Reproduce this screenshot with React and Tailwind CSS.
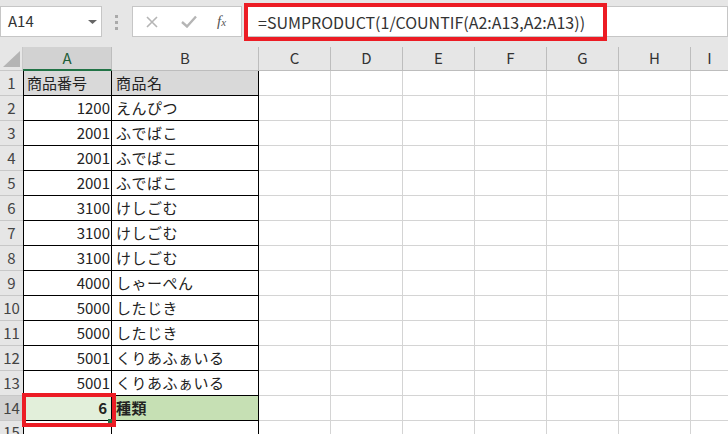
import React from "react";

const font = { fontFamily: '"Noto Sans CJK JP", "Noto Sans", sans-serif' };

const cols = ["C", "D", "E", "F", "G", "H"];

const rows = [
  { n: 1, a: "商品番号", b: "商品名", head: true },
  { n: 2, a: "1200", b: "えんぴつ" },
  { n: 3, a: "2001", b: "ふでばこ" },
  { n: 4, a: "2001", b: "ふでばこ" },
  { n: 5, a: "2001", b: "ふでばこ" },
  { n: 6, a: "3100", b: "けしごむ" },
  { n: 7, a: "3100", b: "けしごむ" },
  { n: 8, a: "3100", b: "けしごむ" },
  { n: 9, a: "4000", b: "しゃーぺん" },
  { n: 10, a: "5000", b: "したじき" },
  { n: 11, a: "5000", b: "したじき" },
  { n: 12, a: "5001", b: "くりあふぁいる" },
  { n: 13, a: "5001", b: "くりあふぁいる" },
  { n: 14, a: "6", b: "種類", total: true },
];

const EmptyCells = () => (
  <>
    {cols.map((c) => (
      <div key={c} className="w-[72px] shrink-0 border-r border-b border-[#d4d4d4]" />
    ))}
    <div className="flex-1 border-b border-[#d4d4d4]" />
  </>
);

const Row = ({ r }) => {
  let aCls = "bg-white";
  let bCls = "bg-white";
  if (r.head) {
    aCls = "bg-[#d9d9d9]";
    bCls = "bg-[#d9d9d9]";
  }
  if (r.total) {
    aCls = "bg-[#e2efda] font-bold pr-[4px]";
    bCls = "bg-[#c6e0b4] font-bold";
  }
  return (
    <div className="flex h-[25px]">
      <div
        className={`w-[23px] shrink-0 flex items-center justify-center text-[15px] text-[#444] border-b border-[#c8c8c8] ${
          r.total ? "bg-[#d2d2d2]" : "bg-[#e6e6e6]"
        }`}
      >
        {r.n}
      </div>
      <div
        className={`w-[89px] shrink-0 flex items-center border-l border-r border-b border-black text-[15px] text-[#222] pl-[3px] pr-[1px] ${
          r.head ? "justify-start" : "justify-end"
        } ${aCls}`}
      >
        {r.a}
      </div>
      <div
        className={`w-[147px] shrink-0 flex items-center border-r border-b border-black text-[15px] text-[#222] pl-[4px] tracking-[0.5px] ${bCls}`}
      >
        {r.b}
      </div>
      <EmptyCells />
    </div>
  );
};

export default function App() {
  return (
    <div className="w-[728px] h-[434px] overflow-hidden bg-white relative" style={font}>
      {/* formula bar */}
      <div className="h-[47px] bg-[#e6e6e6] relative">
        <div className="absolute left-0 top-[6px] w-[102px] h-[31px] bg-white border border-[#c6c6c6] flex items-center pl-[7px] text-[15px] text-[#333]">
          A14
          <svg className="absolute left-[87px] top-[12px]" width="9" height="6" viewBox="0 0 9 6">
            <path d="M0 1 L9 1 L4.5 5 Z" fill="#666" />
          </svg>
        </div>
        <div className="absolute left-[115px] top-[15px] flex flex-col gap-[3px]">
          <span className="block w-[3px] h-[3px] bg-[#aaa]" />
          <span className="block w-[3px] h-[3px] bg-[#aaa]" />
          <span className="block w-[3px] h-[3px] bg-[#aaa]" />
        </div>
        <div className="absolute left-[132px] top-[6px] w-[110px] h-[31px] bg-white border border-[#c6c6c6] flex items-center">
          <svg className="ml-[13px]" width="12" height="12" viewBox="0 0 12 12">
            <path d="M1 1 L11 11 M11 1 L1 11" stroke="#b5b5b5" strokeWidth="1.6" />
          </svg>
          <svg className="ml-[23px]" width="16" height="13" viewBox="0 0 16 13">
            <path d="M1 7 L6 11.5 L15 1.5" stroke="#b5b5b5" strokeWidth="2.4" fill="none" />
          </svg>
          <span
            className="ml-[20px] text-[15px] italic text-[#555]"
            style={{ fontFamily: '"Liberation Serif", serif' }}
          >
            f<span className="text-[11px]">x</span>
          </span>
        </div>
        <div className="absolute left-[244px] right-0 top-[6px] h-[31px] bg-white border border-[#c6c6c6] flex items-center pl-[13px] text-[16px] text-[#333]">
          =SUMPRODUCT(1/COUNTIF(A2:A13,A2:A13))
        </div>
        <div className="absolute left-[244px] top-[3px] w-[363px] h-[38px] border-[4px] border-[#ec1c24]" />
      </div>

      {/* column headers */}
      <div className="flex h-[24px] bg-[#e6e6e6] text-[15px] text-[#333]">
        <div className="w-[23px] shrink-0 relative border-r border-b border-[#c8c8c8]">
          <svg className="absolute left-[3px] top-[4px]" width="17" height="16" viewBox="0 0 17 16">
            <path d="M17 0 L17 16 L0 16 Z" fill="#b4b4b4" />
          </svg>
        </div>
        <div className="w-[89px] shrink-0 flex items-center justify-center bg-[#d2d2d2] border-r border-[#bdbdbd] border-b-2 border-b-[#217346] text-[#1e5e38]">
          A
        </div>
        <div className="w-[147px] shrink-0 flex items-center justify-center border-r border-b border-[#bdbdbd]">
          B
        </div>
        {cols.map((c) => (
          <div
            key={c}
            className="w-[72px] shrink-0 flex items-center justify-center border-r border-b border-[#bdbdbd]"
          >
            {c}
          </div>
        ))}
        <div className="flex-1 flex items-center justify-center border-b border-[#bdbdbd]">I</div>
      </div>

      {/* rows */}
      <div className="relative">
        {rows.map((r) => (
          <Row key={r.n} r={r} />
        ))}
        <div className="flex h-[25px]">
          <div className="w-[23px] shrink-0 flex items-start justify-center pt-[1px] text-[15px] leading-[20px] text-[#444] bg-[#e6e6e6] border-b border-[#c8c8c8]">
            15
          </div>
          <div className="w-[89px] shrink-0 border-l border-r border-black border-b border-b-[#d4d4d4]" />
          <div className="w-[147px] shrink-0 border-r border-black border-b border-b-[#d4d4d4]" />
          <EmptyCells />
        </div>
        <div className="absolute left-[22px] top-[322px] w-[94px] h-[34px] border-[4px] border-[#ec1c24]" />
        <div className="absolute left-[108px] top-[348px] w-[4px] h-[4px] bg-[#217346]" />
      </div>
    </div>
  );
}
